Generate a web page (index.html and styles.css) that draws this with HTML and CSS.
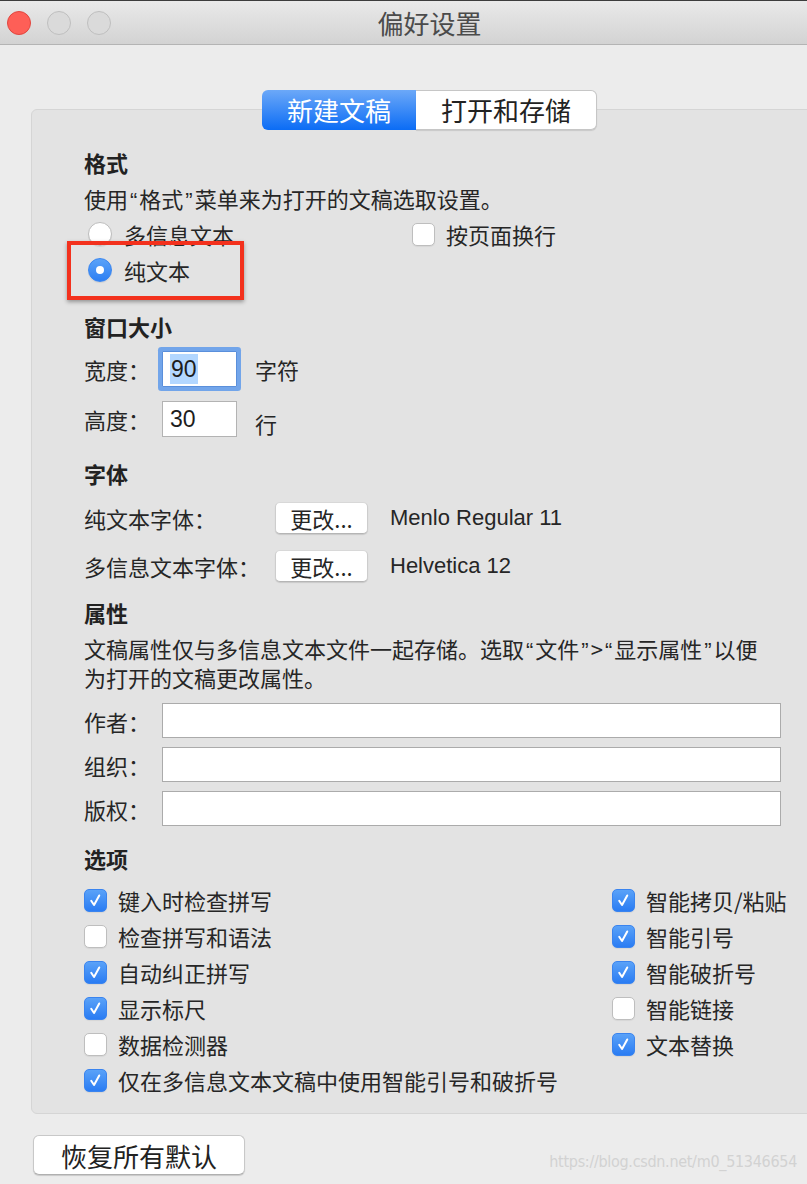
FILE: index.html
```html
<!DOCTYPE html>
<html lang="zh-CN">
<head>
<meta charset="utf-8">
<title>偏好设置</title>
<link rel="stylesheet" href="styles.css">
</head>
<body>
<div class="window">
  <header class="titlebar">
    <div class="lights">
      <span class="light red"></span>
      <span class="light gray"></span>
      <span class="light gray"></span>
    </div>
    <div class="title">偏好设置</div>
    <div></div>
  </header>

  <div class="tabs">
    <span class="tab active">新建文稿</span>
    <span class="tab">打开和存储</span>
  </div>

  <section class="panel">
    <h3 class="heading">格式</h3>
    <p class="desc">使用<span class="q">“</span>格式<span class="q">”</span>菜单来为打开的文稿选取设置。</p>
    <div class="row radio-row">
      <label class="choice choice-wide"><span class="radio"></span><span>多信息文本</span></label>
      <label class="choice"><span class="check"></span><span class="check-label">按页面换行</span></label>
    </div>
    <div class="row radio-row second">
      <label class="choice"><span class="radio on"></span><span>纯文本</span></label>
    </div>
    <div class="annot"></div>

    <h3 class="heading h-size">窗口大小</h3>
    <div class="row size-row">
      <span class="lab">宽度：</span>
      <span class="field focus"><span class="sel">90</span></span>
      <span class="unit">字符</span>
    </div>
    <div class="row size-row second">
      <span class="lab">高度：</span>
      <span class="field">30</span>
      <span class="unit unit-low">行</span>
    </div>

    <h3 class="heading h-font">字体</h3>
    <div class="row font-row">
      <span class="lab lab-wide">纯文本字体：</span>
      <span class="btn">更改...</span>
      <span class="fontname">Menlo Regular 11</span>
    </div>
    <div class="row font-row second">
      <span class="lab lab-wide">多信息文本字体：</span>
      <span class="btn">更改...</span>
      <span class="fontname">Helvetica 12</span>
    </div>

    <h3 class="heading h-attr">属性</h3>
    <p class="para"><span class="line">文稿属性仅与多信息文本文件一起存储。选取<span class="q">“</span>文件<span class="q">”</span>&gt;<span class="q">“</span>显示属性<span class="q">”</span>以便</span><span class="line">为打开的文稿更改属性。</span></p>
    <div class="row meta-row">
      <span class="lab">作者：</span><span class="wide-field"></span>
    </div>
    <div class="row meta-row next">
      <span class="lab">组织：</span><span class="wide-field"></span>
    </div>
    <div class="row meta-row next">
      <span class="lab">版权：</span><span class="wide-field"></span>
    </div>

    <h3 class="heading h-opt">选项</h3>
    <div class="options">
      <label class="opt"><span class="check on"><svg viewBox="0 0 23 23"><path d="M6.8 11.8 L9.9 16.4 L15.6 6"/></svg></span>键入时检查拼写</label>
      <label class="opt"><span class="check on"><svg viewBox="0 0 23 23"><path d="M6.8 11.8 L9.9 16.4 L15.6 6"/></svg></span>智能拷贝/粘贴</label>
      <label class="opt"><span class="check"></span>检查拼写和语法</label>
      <label class="opt"><span class="check on"><svg viewBox="0 0 23 23"><path d="M6.8 11.8 L9.9 16.4 L15.6 6"/></svg></span>智能引号</label>
      <label class="opt"><span class="check on"><svg viewBox="0 0 23 23"><path d="M6.8 11.8 L9.9 16.4 L15.6 6"/></svg></span>自动纠正拼写</label>
      <label class="opt"><span class="check on"><svg viewBox="0 0 23 23"><path d="M6.8 11.8 L9.9 16.4 L15.6 6"/></svg></span>智能破折号</label>
      <label class="opt"><span class="check on"><svg viewBox="0 0 23 23"><path d="M6.8 11.8 L9.9 16.4 L15.6 6"/></svg></span>显示标尺</label>
      <label class="opt"><span class="check"></span>智能链接</label>
      <label class="opt"><span class="check"></span>数据检测器</label>
      <label class="opt"><span class="check on"><svg viewBox="0 0 23 23"><path d="M6.8 11.8 L9.9 16.4 L15.6 6"/></svg></span>文本替换</label>
      <label class="opt span2"><span class="check on"><svg viewBox="0 0 23 23"><path d="M6.8 11.8 L9.9 16.4 L15.6 6"/></svg></span>仅在多信息文本文稿中使用智能引号和破折号</label>
    </div>
  </section>

  <footer class="footer">
    <span class="reset">恢复所有默认</span>
    <span class="watermark">https://blog.csdn.net/m0_51346654</span>
  </footer>
</div>
</body>
</html>
```

FILE: styles.css
```css
html, body {
  margin: 0;
  padding: 0;
  background: #ececec;
  overflow: hidden;
}
body {
  font-family: "Noto Sans CJK SC", "Noto Sans", sans-serif;
  color: #262626;
  font-size: 22px;
}
.window {
  width: 859px;
  height: 1184px;
  background: #ececec;
}

/* title bar */
.titlebar {
  height: 43px;
  border-top: 1px solid #3c3c3c;
  border-bottom: 1px solid #b4b4b4;
  background: linear-gradient(#e9e9e9, #d3d3d3);
  display: grid;
  grid-template-columns: 1fr auto 1fr;
  align-items: center;
}
.lights {
  display: flex;
  gap: 16px;
  padding-left: 7px;
  padding-top: 1px;
}
.light {
  width: 24px;
  height: 24px;
  border-radius: 50%;
  box-sizing: border-box;
}
.light.red {
  background: #fe5f57;
  border: 1px solid #e1463f;
}
.light.gray {
  background: #dadada;
  border: 1px solid #bfbfbf;
}
.title {
  font-size: 26px;
  color: #4b4b4b;
  line-height: 43px;
}

/* segmented tabs */
.tabs {
  position: relative;
  z-index: 1;
  display: flex;
  justify-content: center;
  margin-top: 45px;
  height: 40px;
}
.tab {
  height: 40px;
  box-sizing: border-box;
  display: flex;
  align-items: center;
  justify-content: center;
  font-size: 26px;
  line-height: 1;
}
.tab.active {
  width: 154px;
  color: #fff;
  background: linear-gradient(#6ca8f8, #0b6cf5);
  border-radius: 6px 0 0 6px;
}
.tab:not(.active) {
  width: 181px;
  background: #fff;
  color: #222;
  border: 1px solid #c6c6c6;
  border-left: none;
  border-radius: 0 6px 6px 0;
  box-shadow: 0 1px 1px rgba(0,0,0,0.12);
}

/* panel */
.panel {
  position: relative;
  margin: -21px 31px 0 31px;
  background: #e3e3e3;
  border: 1px solid #d5d5d5;
  border-radius: 6px;
  padding: 38px 46px 15px 52px;
}
.heading {
  margin: 0;
  font-size: 22px;
  font-weight: 700;
  line-height: 28px;
  color: #222;
}
.desc, .para {
  margin: 8px 0 0 0;
  line-height: 28px;
  white-space: nowrap;
}
.para {
  line-height: 26px;
  margin-top: 9px;
}
.line {
  display: block;
}
.q {
  font-family: "Liberation Sans", Arial, sans-serif;
  padding: 0 2px;
}
.row {
  display: flex;
  align-items: center;
}
.radio-row {
  height: 28px;
  margin-top: 5px;
}
.radio-row.second {
  margin-top: 8px;
}
.choice {
  display: flex;
  align-items: center;
  gap: 12px;
}
.choice-wide {
  width: 328px;
  padding-left: 4px;
  box-sizing: border-box;
}
.radio-row.second .choice {
  padding-left: 4px;
}
.radio {
  width: 24px;
  height: 24px;
  border-radius: 50%;
  background: #fff;
  border: 1px solid #bdbdbd;
  box-sizing: border-box;
  box-shadow: 0 1px 1px rgba(0,0,0,0.08);
  display: flex;
  align-items: center;
  justify-content: center;
}
.radio.on {
  background: linear-gradient(#5aa2f8, #2d7ff3);
  border-color: #3a86f0;
}
.radio.on::after {
  content: "";
  width: 8px;
  height: 8px;
  border-radius: 50%;
  background: #fff;
}
.check {
  width: 23px;
  height: 23px;
  border-radius: 5px;
  background: #fff;
  border: 1px solid #bebebe;
  box-sizing: border-box;
  box-shadow: 0 1px 1px rgba(0,0,0,0.06);
  flex: none;
  display: flex;
}
.check.on {
  background: linear-gradient(#5aa2f8, #2a7cf3);
  border-color: #3a84ef;
}
.check svg {
  width: 21px;
  height: 21px;
}
.check svg path {
  fill: none;
  stroke: #fff;
  stroke-width: 2.2;
  stroke-linecap: round;
  stroke-linejoin: round;
}
.check-label {
  margin-left: -1px;
}
.annot {
  position: absolute;
  left: 35px;
  top: 131px;
  width: 177px;
  height: 59px;
  border: 4px solid #f3311d;
  box-sizing: border-box;
  box-shadow: 0 2px 4px rgba(0,0,0,0.35);
}

.h-size { margin-top: 28px; }
.lab {
  width: 78px;
  flex: none;
}
.lab-wide { width: 191px; }
.size-row {
  height: 36px;
  margin-top: 11px;
}
.size-row.second { margin-top: 14px; }
.field {
  width: 75px;
  height: 36px;
  box-sizing: border-box;
  background: #fff;
  border: 1px solid #b3b3b3;
  font-family: "Liberation Sans", Arial, sans-serif;
  font-size: 23px;
  display: flex;
  align-items: center;
  padding-left: 7px;
  color: #1d1d1d;
}
.field.focus {
  border-color: #5a8fdb;
  box-shadow: 0 0 0 4px #72a5ea;
  border-radius: 1px;
}
.sel {
  background: #b3d7ff;
  padding: 0 1px;
  line-height: 30px;
}
.unit {
  margin-left: 18px;
}
.unit-low {
  margin-top: 8px;
}

.h-font { margin-top: 22px; }
.font-row {
  height: 32px;
  margin-top: 15px;
}
.font-row.second { margin-top: 16px; }
.btn {
  width: 93px;
  height: 32px;
  box-sizing: border-box;
  background: #fff;
  border: 1px solid #cdcdcd;
  border-top-color: #d8d8d8;
  border-bottom-color: #b5b5b5;
  border-radius: 5px;
  box-shadow: 0 1px 1px rgba(0,0,0,0.12);
  display: flex;
  align-items: center;
  justify-content: center;
  flex: none;
}
.fontname {
  margin-left: 22px;
  font-family: "Liberation Sans", Arial, sans-serif;
  font-size: 22px;
}

.h-attr { margin-top: 16px; }
.meta-row {
  height: 35px;
  margin-top: 13px;
}
.meta-row.next { margin-top: 9px; }
.wide-field {
  flex: 1;
  height: 35px;
  box-sizing: border-box;
  background: #fff;
  border: 1px solid #ababab;
}

.h-opt { margin-top: 18px; }
.options {
  margin-top: 10px;
  display: grid;
  grid-template-columns: 528px auto;
  grid-auto-rows: 36px;
}
.opt {
  display: flex;
  align-items: center;
  gap: 11px;
  font-size: 22px;
  white-space: nowrap;
}
.span2 { grid-column: 1 / 3; }

/* footer */
.footer {
  display: flex;
  justify-content: space-between;
  align-items: flex-end;
  margin-top: 21px;
  padding: 0 62px 0 33px;
}
.reset {
  width: 212px;
  height: 40px;
  box-sizing: border-box;
  background: #fff;
  border: 1px solid #c8c8c8;
  border-bottom-color: #b0b0b0;
  border-radius: 6px;
  box-shadow: 0 1px 1px rgba(0,0,0,0.15);
  display: flex;
  align-items: center;
  justify-content: center;
  font-size: 26px;
  color: #222;
}
.watermark {
  font-family: "DejaVu Sans Condensed", "Liberation Sans Narrow", "Liberation Sans", sans-serif;
  font-stretch: condensed;
  font-size: 16px;
  color: #d2d2d2;
  letter-spacing: -0.3px;
  margin-bottom: 4px;
}
```
